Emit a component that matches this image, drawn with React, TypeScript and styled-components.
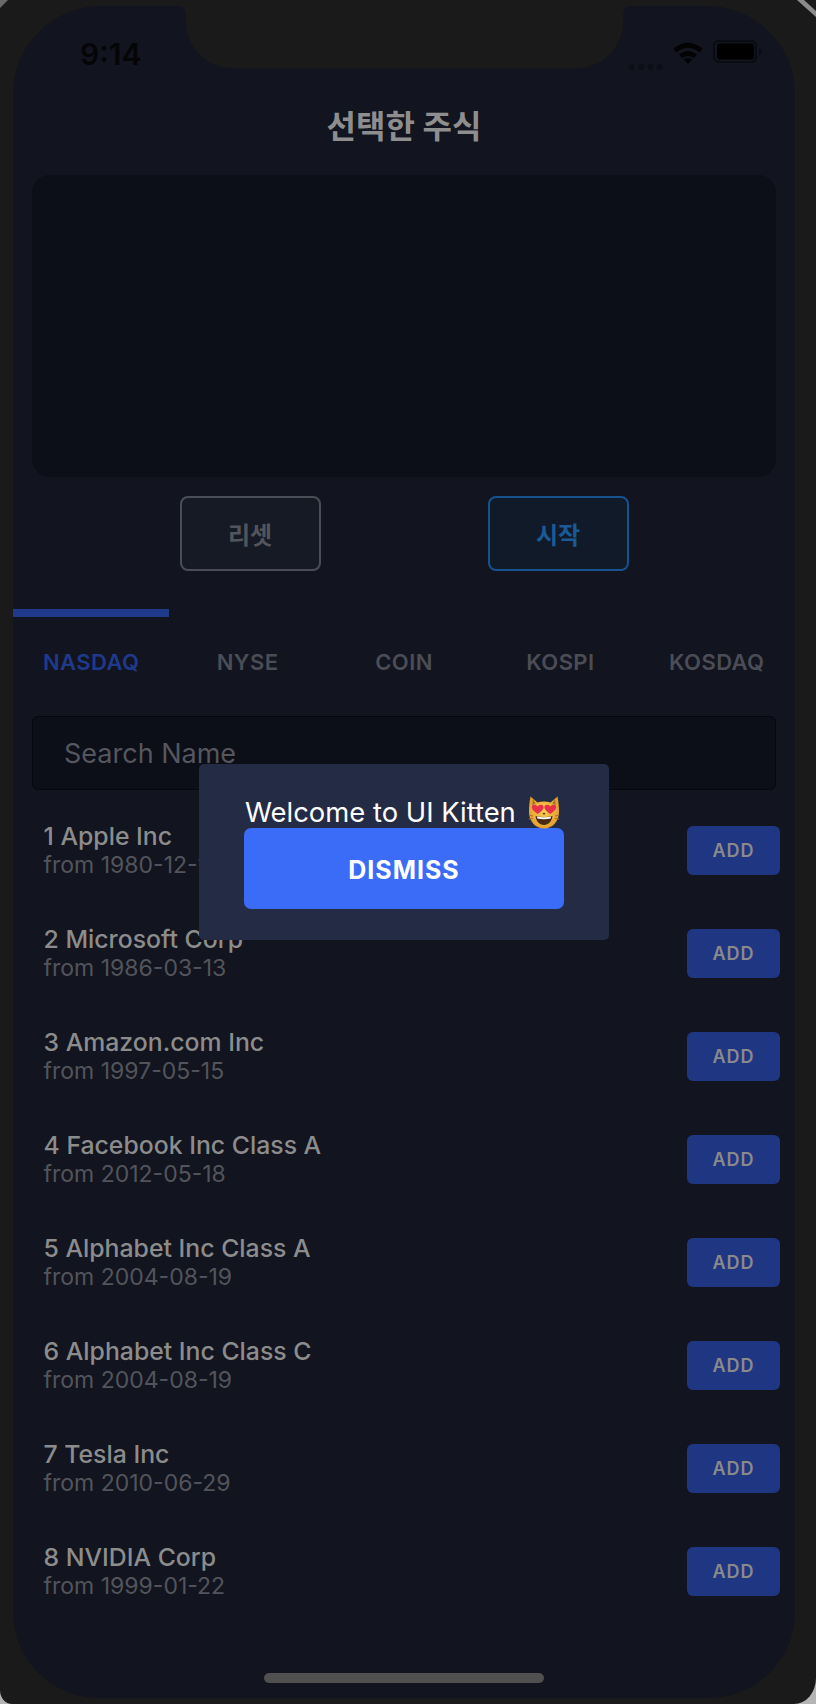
import React from "react";
import styled, { createGlobalStyle } from "styled-components";

const Global = createGlobalStyle`
  html, body { margin: 0; padding: 0; background: #b4b4b4; }
  body { font-family: Inter, "Noto Sans CJK KR", sans-serif; }
`;

const Device = styled.div`
  position: relative;
  width: 816px;
  height: 1704px;
  box-sizing: border-box;
  padding: 6px 21px 6px 13px;
  background: #1a1a1a;
  border-radius: 0 0 22px 12px / 0 0 26px 14px;
  overflow: hidden;
`;

const Screen = styled.div`
  width: 782px;
  height: 1692px;
  display: flex;
  flex-direction: column;
  background: #12141f;
  border-radius: 88px 88px 86px 86px;
  overflow: hidden;
`;

const Notch = styled.div`
  position: absolute;
  left: 186px;
  top: 0;
  width: 437px;
  height: 68px;
  background: #1a1a1a;
  border-radius: 0 0 46px 46px;
  &::before, &::after {
    content: "";
    position: absolute;
    top: 6px;
    width: 10px;
    height: 8px;
  }
  &::before {
    left: -10px;
    background: radial-gradient(circle at 0 100%, transparent 9px, #1a1a1a 10px);
  }
  &::after {
    right: -10px;
    background: radial-gradient(circle at 100% 100%, transparent 9px, #1a1a1a 10px);
  }
`;

const StatusBar = styled.div`
  height: 101px;
  flex: none;
  box-sizing: border-box;
  padding: 33px 32px 0 67px;
  display: flex;
  justify-content: space-between;
  align-items: flex-start;
`;

const Clock = styled.span`
  font-size: 30px;
  line-height: 30px;
  font-weight: 600;
  color: #050507;
`;

const StatusIcons = styled.div`
  display: flex;
  align-items: flex-start;
  margin-top: -1px;
`;

const Title = styled.h1`
  margin: 0;
  height: 40px;
  font-size: 32px;
  line-height: 40px;
  font-weight: 700;
  color: #8e8e8e;
  text-align: center;
  flex: none;
`;

const Panel = styled.div`
  flex: none;
  height: 302px;
  margin: 28px 19px 0;
  background: #0c0e18;
  border-radius: 18px;
`;

const Actions = styled.div`
  flex: none;
  display: grid;
  grid-template-columns: 141px 141px;
  justify-content: center;
  column-gap: 167px;
  margin: 19px 0 38px;
`;

const ActionButton = styled.div<{ $primary?: boolean }>`
  height: 75px;
  box-sizing: border-box;
  border: 2px solid ${(p) => (p.$primary ? "#16528f" : "#4b4d56")};
  border-radius: 8px;
  background: ${(p) => (p.$primary ? "#101a29" : "#161a24")};
  color: ${(p) => (p.$primary ? "#1b5a96" : "#53555d")};
  font-size: 24px;
  font-weight: 700;
  display: flex;
  align-items: center;
  justify-content: center;
`;

const Tabs = styled.div`
  flex: none;
  display: grid;
  grid-template-columns: repeat(5, 1fr);
  margin-bottom: 19px;
`;

const Tab = styled.div<{ $active?: boolean }>`
  height: 88px;
  box-sizing: border-box;
  padding-top: 10px;
  border-top: 8px solid ${(p) => (p.$active ? "#1f3a8a" : "transparent")};
  display: flex;
  align-items: center;
  justify-content: center;
  font-size: 22px;
  font-weight: 600;
  letter-spacing: 0.4px;
  color: ${(p) => (p.$active ? "#1f3a8a" : "#4b4d56")};
`;

const SearchBox = styled.div`
  flex: none;
  height: 74px;
  box-sizing: border-box;
  margin: 0 19px 9px;
  padding: 0 31px;
  display: flex;
  align-items: center;
  background: #0c0e18;
  border: 1px solid #05070f;
  border-radius: 6px;
  font-size: 27px;
  color: #55565e;
`;

const Row = styled.div`
  flex: none;
  height: 103px;
  box-sizing: border-box;
  padding: 0 15px 0 30.5px;
  display: flex;
  align-items: center;
  justify-content: space-between;
`;

const RowText = styled.div`
  display: flex;
  flex-direction: column;
`;

const RowTitle = styled.span`
  font-size: 24.8px;
  line-height: 29px;
  font-weight: 500;
  color: #8c8c8c;
`;

const RowSub = styled.span`
  font-size: 23px;
  line-height: 29px;
  color: #53545b;
`;

const AddButton = styled.div`
  width: 93px;
  height: 49px;
  background: #1f3682;
  border-radius: 6px;
  display: flex;
  align-items: center;
  justify-content: center;
  font-size: 18px;
  font-weight: 600;
  letter-spacing: 0.9px;
  color: #8a8a8a;
`;

const HomeBar = styled.div`
  position: absolute;
  left: 264px;
  top: 1673px;
  width: 280px;
  height: 10px;
  border-radius: 5px;
  background: #505050;
`;

const Modal = styled.div`
  position: absolute;
  left: 199px;
  top: 764px;
  width: 410px;
  height: 176px;
  box-sizing: border-box;
  padding: 31px 45px;
  background: #232b45;
  border-radius: 5px;
`;

const ModalText = styled.div`
  height: 33px;
  display: flex;
  align-items: center;
  gap: 12px;
  padding-left: 1px;
  font-size: 27.4px;
  color: #ffffff;
  white-space: nowrap;
`;

const DismissButton = styled.div`
  width: 320px;
  height: 81px;
  padding-top: 2px;
  box-sizing: border-box;
  background: #3b6cf8;
  border-radius: 7px;
  display: flex;
  align-items: center;
  justify-content: center;
  font-size: 25px;
  font-weight: 700;
  letter-spacing: 1px;
  color: #ffffff;
`;

const TopCorner = styled.svg<{ $right?: boolean }>`
  position: absolute;
  top: 0;
  ${(p) => (p.$right ? "right: 0;" : "left: 0;")}
`;

const stocks = [
  ["1 Apple Inc", "from 1980-12-12"],
  ["2 Microsoft Corp", "from 1986-03-13"],
  ["3 Amazon.com Inc", "from 1997-05-15"],
  ["4 Facebook Inc Class A", "from 2012-05-18"],
  ["5 Alphabet Inc Class A", "from 2004-08-19"],
  ["6 Alphabet Inc Class C", "from 2004-08-19"],
  ["7 Tesla Inc", "from 2010-06-29"],
  ["8 NVIDIA Corp", "from 1999-01-22"],
];

const tabs = ["NASDAQ", "NYSE", "COIN", "KOSPI", "KOSDAQ"];

const Signal = () => (
  <svg width="36" height="8" viewBox="0 0 36 8" style={{ marginTop: 25, marginRight: 9 }}>
    {[3.5, 13.5, 22.5, 31.5].map((x) => (
      <circle key={x} cx={x} cy="4" r="3.2" fill="#0d0f18" />
    ))}
  </svg>
);

const Wifi = () => (
  <svg width="30" height="23" viewBox="0 0 30 23" style={{ marginTop: 3, marginRight: 10 }}>
    <path d="M0.5 7.8 C9 -0.4 21 -0.4 29.5 7.8 L26.4 11.4 C19.5 5.2 10.5 5.2 3.6 11.4 Z" fill="#030303" />
    <path d="M6.2 13.6 C11.5 9 18.5 9 23.8 13.6 L20.6 17.2 C17.2 14.2 12.8 14.2 9.4 17.2 Z" fill="#030303" />
    <path d="M15 23 L10.8 18.4 C13.4 16.8 16.6 16.8 19.2 18.4 Z" fill="#030303" />
  </svg>
);

const Battery = () => (
  <svg width="50" height="24" viewBox="0 0 50 24" style={{ marginTop: 2 }}>
    <rect x="1" y="1" width="42" height="21" rx="5" fill="none" stroke="#0a0c14" strokeWidth="2" />
    <rect x="4" y="3.5" width="37" height="16" rx="3" fill="#000" />
    <path d="M46 8 C48 9 48.6 10 48.6 11.5 C48.6 13 48 14 46 15 Z" fill="#0a0c14" />
  </svg>
);

const CatEmoji = () => (
  <svg width="32" height="34" viewBox="0 0 32 34">
    <defs>
      <radialGradient id="catFace" cx="50%" cy="45%" r="60%">
        <stop offset="0%" stopColor="#f9cf4e" />
        <stop offset="100%" stopColor="#e09a2c" />
      </radialGradient>
    </defs>
    <path
      d="M2.5 1.5 L9.5 7.5 C13.5 6.3 18.5 6.3 22.5 7.5 L29.5 1.5 C30.6 7 31 12 31 17 C31 27 24 33.5 16 33.5 C8 33.5 1 27 1 17 C1 12 1.4 7 2.5 1.5 Z"
      fill="url(#catFace)"
    />
    <path d="M5 3.8 L7.6 8.4 L4.2 10.4 Z" fill="#a9702a" />
    <path d="M27 3.8 L24.4 8.4 L27.8 10.4 Z" fill="#a9702a" />
    <path d="M9.8 19 C7 17 3.6 14.6 3.8 11.8 C4 9.4 7.6 8.8 9.6 11.4 C11.6 8.8 15.4 9.4 15.6 11.8 C15.8 14.6 12.6 17 9.8 19 Z" fill="#e8304a" />
    <path d="M22.2 19 C19.4 17 16.2 14.6 16.4 11.8 C16.6 9.4 20.4 8.8 22.4 11.4 C24.4 8.8 28 9.4 28.2 11.8 C28.4 14.6 25 17 22.2 19 Z" fill="#e8304a" />
    <ellipse cx="16" cy="18.6" rx="1.3" ry="0.9" fill="#5a3410" />
    <path d="M7.6 21 C12.5 22.4 19.5 22.4 24.4 21 C24 26.4 20.4 30 16 30 C11.6 30 8 26.4 7.6 21 Z" fill="#4a2a12" />
    <path d="M9 21.6 C13 22.6 19 22.6 23 21.6 L22.6 23.6 C18.6 24.4 13.4 24.4 9.4 23.6 Z" fill="#ffffff" />
    <path d="M0.8 20 L5 21 M0.8 24 L5 23.4 M31.2 20 L27 21 M31.2 24 L27 23.4" stroke="#a9702a" strokeWidth="1" />
  </svg>
);

export default function App() {
  return (
    <>
      <Global />
      <Device>
        <Screen>
          <StatusBar>
            <Clock>9:14</Clock>
            <StatusIcons>
              <Signal />
              <Wifi />
              <Battery />
            </StatusIcons>
          </StatusBar>
          <Title>선택한 주식</Title>
          <Panel />
          <Actions>
            <ActionButton>리셋</ActionButton>
            <ActionButton $primary>시작</ActionButton>
          </Actions>
          <Tabs>
            {tabs.map((t, i) => (
              <Tab key={t} $active={i === 0}>
                {t}
              </Tab>
            ))}
          </Tabs>
          <SearchBox>Search Name</SearchBox>
          {stocks.map(([name, from]) => (
            <Row key={name}>
              <RowText>
                <RowTitle>{name}</RowTitle>
                <RowSub>{from}</RowSub>
              </RowText>
              <AddButton>ADD</AddButton>
            </Row>
          ))}
        </Screen>
        <Notch />
        <HomeBar />
        <TopCorner width="10" height="10" viewBox="0 0 10 10">
          <path d="M0 0 L8 0 L0 8 Z" fill="#6a6a6a" />
        </TopCorner>
        <TopCorner $right width="20" height="18" viewBox="0 0 20 18">
          <path d="M1 0 L8 0 L20 11 L20 17 Z" fill="#8c8c8c" />
        </TopCorner>
        <Modal>
          <ModalText>
            Welcome to UI Kitten
            <CatEmoji />
          </ModalText>
          <DismissButton>DISMISS</DismissButton>
        </Modal>
      </Device>
    </>
  );
}
